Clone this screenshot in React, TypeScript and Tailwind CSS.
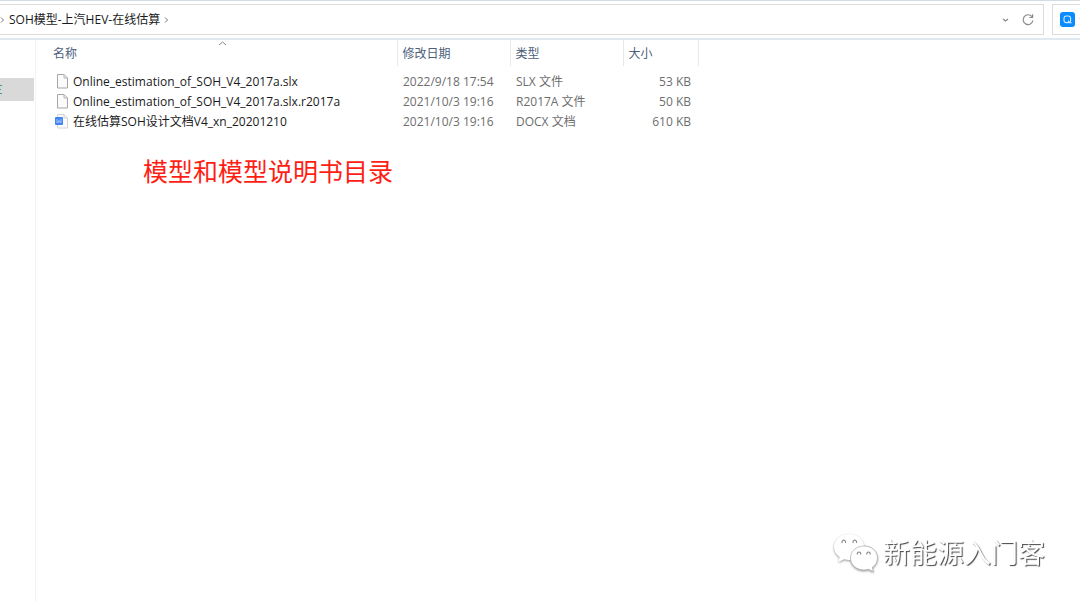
const files = [
  { name: "Online_estimation_of_SOH_V4_2017a.slx", date: "2022/9/18 17:54", type: "SLX 文件", size: "53 KB", icon: "blank" },
  { name: "Online_estimation_of_SOH_V4_2017a.slx.r2017a", date: "2021/10/3 19:16", type: "R2017A 文件", size: "50 KB", icon: "blank" },
  { name: "在线估算SOH设计文档V4_xn_20201210", date: "2021/10/3 19:16", type: "DOCX 文档", size: "610 KB", icon: "doc" },
];

function FileIcon({ kind }: { kind: string }) {
  return (
    <svg width="14" height="16" viewBox="0 0 14 16" fill="none" className="shrink-0">
      <path
        d="M2.500 .5h6.500l3.500 3.500v10h-10z"
        fill="#fbfbfb"
        stroke={kind === "doc" ? "#d4d4d4" : "#a6a6a6"}
      />
      <path d="M9 .5v3.500h3.500" stroke={kind === "doc" ? "#d4d4d4" : "#b4b4b4"} />
      {kind === "doc" && (
        <>
          <rect x="0" y="3" width="8" height="8" rx="1" fill="#4285f0" />
          <path d="M2 5v4M6 5v4M4 6v2M2 8h4" stroke="#b9d3ff" strokeWidth="0.8" />
        </>
      )}
    </svg>
  );
}

function Chevron({ className = "" }: { className?: string }) {
  return (
    <svg width="5" height="8" viewBox="0 0 5 8" fill="none" stroke="#777" className={className}>
      <path d="M1 1.5 3.5 4 1 6.5" />
    </svg>
  );
}

function AddressBar() {
  return (
    <header className="flex h-10 gap-2 border-t border-b-2 border-t-[#d5dbe3] border-b-[#e0e8f0] pt-[3px] pb-[3px]">
      <nav className="flex flex-1 items-center border border-l-0 border-[#dcdcdc] pr-2">
        <Chevron />
        <button className="ml-1 text-[12px] text-[#1a1a1a]">SOH模型-上汽HEV-在线估算</button>
        <Chevron className="ml-1" />
        <button aria-label="历史记录" className="ml-auto">
          <svg width="7" height="6" viewBox="0 0 7 6" fill="none" stroke="#888" strokeWidth="1.3">
            <path d="M1 2 3.500 4 6 2" />
          </svg>
        </button>
        <button aria-label="刷新" className="ml-3">
          <svg width="14" height="14" viewBox="0 0 14 14" fill="none" stroke="#8a8a8a" strokeWidth="1.2">
            <path d="M11 3.7A4.9 4.9 0 1 0 11.9 7.5" />
            <path d="M11.6 1.3v3.2H8.4" />
          </svg>
        </button>
      </nav>
      <button
        aria-label="搜索"
        className="flex w-7 items-center gap-1 overflow-hidden border border-r-0 border-[#dcdcdc] pl-[7px]"
      >
        <svg width="15" height="15" viewBox="0 0 15 15" fill="none" className="shrink-0">
          <rect width="15" height="15" rx="3" fill="#0a8cff" />
          <rect x="4" y="4" width="6.600" height="6.600" rx="2.400" stroke="#cfe9ff" strokeWidth="1.1" />
          <path d="M8 8.600 9.500 10.700H11.700" stroke="#cfe9ff" strokeWidth="1.1" />
        </svg>
        <svg width="7" height="6" viewBox="0 0 7 6" fill="none" stroke="#777" className="shrink-0">
          <path d="M1 1.5 3.5 4 6 1.5" />
        </svg>
      </button>
    </header>
  );
}

function FileTable() {
  return (
    <table className="table-fixed border-collapse text-left text-[12px] leading-5 whitespace-nowrap">
      <colgroup>
        <col className="w-[361px]" />
        <col className="w-[113px]" />
        <col className="w-[113px]" />
        <col className="w-[75px]" />
      </colgroup>
      <thead className="text-[#4c607a]">
        <tr className="h-[26px]">
          <th className="relative border-r border-[#e8e8e8] pt-[2px] pl-[17px] font-normal">
            名称
            <svg
              width="9"
              height="5"
              viewBox="0 0 9 5"
              fill="none"
              stroke="#8a8a8a"
              className="absolute top-px left-1/2 ml-[2px]"
            >
              <path d="M1 4 4.5 1 8 4" />
            </svg>
          </th>
          <th className="border-r border-[#e8e8e8] pt-[2px] pl-[5px] font-normal">修改日期</th>
          <th className="border-r border-[#e8e8e8] pt-[2px] pl-[5px] font-normal">类型</th>
          <th className="border-r border-[#e8e8e8] pt-[2px] pl-[5px] font-normal">大小</th>
        </tr>
      </thead>
      <tbody className="text-[#6d6d6d]">
        <tr className="h-[6px]" aria-hidden="true">
          <td colSpan={4} />
        </tr>
        {files.map(file => (
          <tr key={file.name} className="h-5">
            <td className="pl-[19px] text-[#1a1a1a]">
              <div className="flex items-center gap-1">
                <FileIcon kind={file.icon} />
                {file.name}
              </div>
            </td>
            <td className="pl-[6px]">{file.date}</td>
            <td className="pl-[6px]">{file.type}</td>
            <td className="pr-[7px] text-right">{file.size}</td>
          </tr>
        ))}
      </tbody>
    </table>
  );
}

function Watermark() {
  return (
    <div className="fixed right-[35px] bottom-[29px] flex items-center gap-1">
      <svg
        width="46"
        height="40"
        viewBox="0 0 46 40"
        fill="#fff"
        className="drop-shadow-[0_1px_1px_#999999]"
      >
        <path d="M16 1C7.500 1 1 6.700 1 14c0 4.200 2.100 7.600 5.600 10L5.500 29l5.600-2.800c1.700.4 3.200.8 5 .8 8.300 0 15-5.800 15-13S24.500 1 16 1z" />
        <path d="M31 13c-7.600 0-13.500 5.200-13.500 12S23.400 37 31 37c1.600 0 3-.3 4.500-.7l5 2.400-1.300-4.200c3.200-2.200 5.300-5.600 5.300-9.500 0-6.800-5.900-12-13.500-12z" stroke="#aaa" strokeWidth="0.700" />
        <g fill="none" stroke="#8b8b8b" strokeWidth="1.200">
          <path d="M9.300 10a1.800 1.800 0 1 1 3 0M20.300 10a1.800 1.800 0 1 1 3 0" />
          <path d="M24.500 21.500a1.700 1.700 0 1 1 3 0M34 21.500a1.700 1.700 0 1 1 3 0" />
        </g>
      </svg>
      <span className="text-[27px] leading-9 text-white [text-shadow:1px_1px_1px_#444444]">新能源入门客</span>
    </div>
  );
}

export default function App() {
  return (
    <div className="flex min-h-screen flex-col overflow-hidden bg-white font-['Open_Sans','Noto_Sans_CJK_SC',sans-serif]">
      <AddressBar />
      <div className="flex flex-1">
        <aside className="w-9 shrink-0 border-r border-[#f3f3f3] pt-[38px]">
          <div className="flex h-[23px] w-[34px] items-center bg-[#d9d9d9]">
            <svg width="2" height="9" viewBox="0 0 2 9" stroke="#3a9c9c" fill="none">
              <path d="M0 .5h2M0 4.500h1M0 8.500h2" />
            </svg>
          </div>
        </aside>
        <main>
          <FileTable />
          <h1 className="mt-[21px] ml-[107px] text-[25px] leading-9 text-[#ff1e14]">模型和模型说明书目录</h1>
        </main>
      </div>
      <Watermark />
    </div>
  );
}
